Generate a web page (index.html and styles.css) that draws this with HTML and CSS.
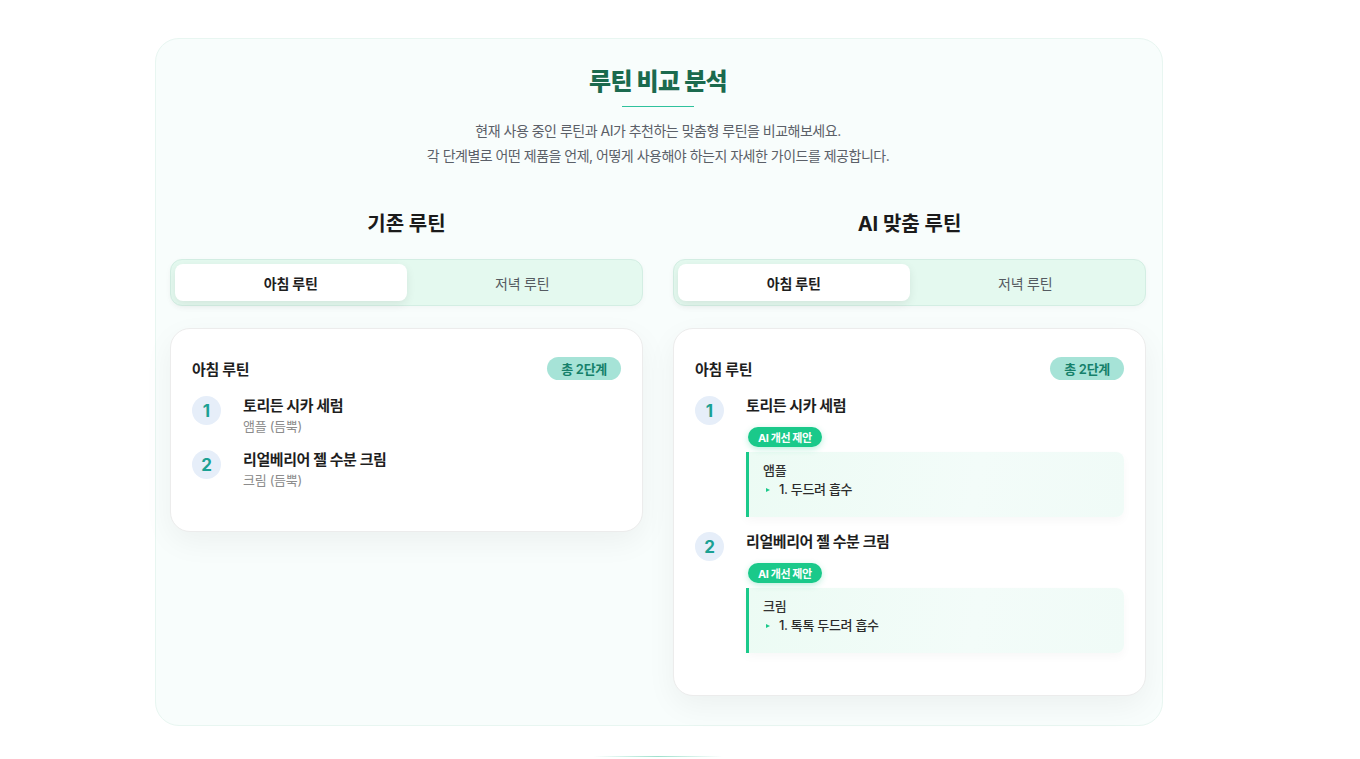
FILE: index.html
```html
<!DOCTYPE html>
<html lang="ko">
<head>
<meta charset="utf-8">
<title>루틴 비교 분석</title>
<link rel="stylesheet" href="styles.css">
</head>
<body>
<div class="page">
  <section class="compare">
    <h1 class="title">루틴 비교 분석</h1>
    <div class="title-line"></div>
    <p class="desc">현재 사용 중인 루틴과 AI가 추천하는 맞춤형 루틴을 비교해보세요.<br>각 단계별로 어떤 제품을 언제, 어떻게 사용해야 하는지 자세한 가이드를 제공합니다.</p>

    <div class="columns">
      <div class="col">
        <h2 class="col-title">기존 루틴</h2>
        <div class="tabs">
          <div class="tab active">아침 루틴</div>
          <div class="tab">저녁 루틴</div>
        </div>
        <div class="card">
          <div class="card-head">
            <span class="card-title">아침 루틴</span>
            <span class="count">총 2단계</span>
          </div>
          <div class="step">
            <div class="num">1</div>
            <div class="step-body">
              <div class="step-name">토리든 시카 세럼</div>
              <div class="step-sub">앰플 (듬뿍)</div>
            </div>
          </div>
          <div class="step">
            <div class="num">2</div>
            <div class="step-body">
              <div class="step-name">리얼베리어 젤 수분 크림</div>
              <div class="step-sub">크림 (듬뿍)</div>
            </div>
          </div>
        </div>
      </div>

      <div class="col">
        <h2 class="col-title">AI 맞춤 루틴</h2>
        <div class="tabs">
          <div class="tab active">아침 루틴</div>
          <div class="tab">저녁 루틴</div>
        </div>
        <div class="card">
          <div class="card-head">
            <span class="card-title">아침 루틴</span>
            <span class="count">총 2단계</span>
          </div>
          <div class="step step-ai">
            <div class="num">1</div>
            <div class="step-body">
              <div class="step-name">토리든 시카 세럼</div>
              <span class="ai-badge">AI 개선 제안</span>
              <div class="tip">
                <div class="tip-type">앰플</div>
                <div class="tip-item"><span class="tri"></span>1. 두드려 흡수</div>
              </div>
            </div>
          </div>
          <div class="step step-ai">
            <div class="num">2</div>
            <div class="step-body">
              <div class="step-name">리얼베리어 젤 수분 크림</div>
              <span class="ai-badge">AI 개선 제안</span>
              <div class="tip">
                <div class="tip-type">크림</div>
                <div class="tip-item"><span class="tri"></span>1. 톡톡 두드려 흡수</div>
              </div>
            </div>
          </div>
        </div>
      </div>
    </div>
  </section>
  <div class="next-line"></div>
</div>
</body>
</html>
```

FILE: styles.css
```css
* { box-sizing: border-box; }
html, body {
  margin: 0;
  padding: 0;
  background: #ffffff;
}
body {
  font-family: Inter, "Noto Sans CJK KR", sans-serif;
  color: #222;
}
.page {
  padding: 38px 0 0 155px;
}
.compare {
  width: 1008px;
  background: #f8fdfc;
  border: 1px solid #e8f6f1;
  border-radius: 24px;
  padding: 27px 16px 29px 14px;
  text-align: center;
}
.title {
  margin: 0;
  font-size: 24px;
  line-height: 32px;
  font-weight: 800;
  color: #1b6a4e;
  letter-spacing: -0.6px;
}
.title-line {
  width: 72px;
  height: 1px;
  margin: 8px auto 0;
  background: #2fc29d;
}
.desc {
  margin: 11px 0 0;
  font-size: 14px;
  line-height: 25px;
  letter-spacing: -0.5px;
  color: #5b6068;
}
.columns {
  display: flex;
  gap: 30px;
  margin-top: 42px;
  text-align: left;
}
.col {
  flex: 1;
  min-width: 0;
}
.col-title {
  margin: 0;
  text-align: center;
  font-size: 20px;
  line-height: 28px;
  font-weight: 700;
  color: #1b1b1b;
}
.tabs {
  display: flex;
  margin-top: 21px;
  padding: 4px;
  background: #e4f9ef;
  border: 1px solid #d3eee3;
  border-radius: 12px;
  box-shadow: 0 2px 6px rgba(0, 0, 0, 0.03);
}
.tab {
  flex: 1;
  height: 37px;
  display: flex;
  align-items: center;
  justify-content: center;
  font-size: 14px;
  letter-spacing: -0.2px;
  color: #555b61;
  border-radius: 8px;
}
.tab.active {
  background: #ffffff;
  color: #1e1e1e;
  font-weight: 700;
  box-shadow: 0 3px 10px rgba(0, 0, 0, 0.08);
}
.card {
  margin-top: 22px;
  background: #ffffff;
  border: 1px solid #ececec;
  border-radius: 20px;
  padding: 28px 21px 27px;
  box-shadow: 0 10px 30px rgba(0, 0, 0, 0.05);
}
.card-head {
  display: flex;
  align-items: center;
  justify-content: space-between;
  margin-bottom: 16px;
}
.card-title {
  font-size: 15px;
  font-weight: 700;
  letter-spacing: -0.3px;
  color: #1e1e1e;
}
.count {
  display: inline-flex;
  align-items: center;
  height: 23px;
  padding: 0 14px;
  border-radius: 12px;
  background: #a6e3d7;
  color: #15806a;
  font-size: 13px;
  font-weight: 600;
  letter-spacing: -0.3px;
}
.step {
  display: flex;
  gap: 22px;
  margin-bottom: 14px;
}
.step-ai {
  margin-bottom: 15px;
}
.num {
  flex: none;
  width: 29px;
  height: 29px;
  border-radius: 50%;
  background: #e6eef9;
  color: #1ba193;
  font-size: 17px;
  font-weight: 700;
  display: flex;
  align-items: center;
  justify-content: center;
}
.step-body {
  flex: 1;
  min-width: 0;
}
.step-name {
  font-size: 15px;
  line-height: 20px;
  font-weight: 700;
  letter-spacing: -0.4px;
  color: #1e1e1e;
}
.step-sub {
  font-size: 13px;
  line-height: 20px;
  letter-spacing: -0.3px;
  color: #8c8c8c;
}
.ai-badge {
  display: inline-flex;
  align-items: center;
  height: 20px;
  margin: 11px 0 0 2px;
  padding: 0 10px;
  border-radius: 10px;
  background: #1ac98a;
  color: #ffffff;
  font-size: 11px;
  font-weight: 700;
  letter-spacing: -0.4px;
  box-shadow: 0 2px 6px rgba(26, 201, 138, 0.3);
}
.tip {
  margin-top: 5px;
  padding: 8px 14px 18px 14px;
  border-left: 3px solid #1ac98a;
  border-radius: 0 8px 8px 0;
  background: linear-gradient(100deg, #ecfbf4 0%, #f3fcf9 60%, #f0fbf7 100%);
  box-shadow: 0 4px 10px rgba(0, 0, 0, 0.03);
}
.tip-type {
  font-size: 13px;
  line-height: 20px;
  font-weight: 500;
  letter-spacing: -0.3px;
  color: #333;
}
.tip-item {
  display: flex;
  align-items: center;
  font-size: 13px;
  line-height: 19px;
  font-weight: 500;
  letter-spacing: -0.3px;
  color: #2b2b2b;
}
.tri {
  width: 0;
  height: 0;
  margin: 0 9px 0 3px;
  border-left: 4px solid #1ac98a;
  border-top: 2.5px solid transparent;
  border-bottom: 2.5px solid transparent;
}
.next-line {
  width: 130px;
  height: 1px;
  margin: 30px 0 0 438px;
  background: linear-gradient(90deg, rgba(160, 225, 205, 0), #9fe0cc 50%, rgba(160, 225, 205, 0));
}
```
